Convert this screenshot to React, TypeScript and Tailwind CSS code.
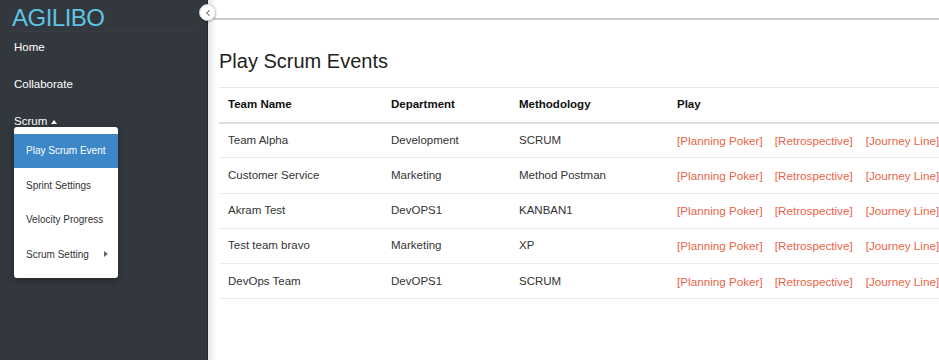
import { ChevronLeft } from 'lucide-react';

const teams = [
  { name: 'Team Alpha', dept: 'Development', method: 'SCRUM' },
  { name: 'Customer Service', dept: 'Marketing', method: 'Method Postman' },
  { name: 'Akram Test', dept: 'DevOPS1', method: 'KANBAN1' },
  { name: 'Test team bravo', dept: 'Marketing', method: 'XP' },
  { name: 'DevOps Team', dept: 'DevOPS1', method: 'SCRUM' },
];

const scrumMenu = ['Play Scrum Event', 'Sprint Settings', 'Velocity Progress', 'Scrum Setting'];

function Sidebar() {
  return (
    <aside className="w-[208px] shrink-0 h-full bg-[#33383f] border-r border-[#24282d]">
      <div className="mx-3 h-[32px] border-b border-[#383d44]">
        <div className="pt-[6px] text-[24px] leading-[24px] tracking-[-0.5px] text-[#5ec4e1]">AGILIBO</div>
      </div>
      <nav className="flex flex-col gap-[24px] pt-[9px] px-[14px] text-[11.5px] leading-[13px] text-white">
        <a href="#">Home</a>
        <a href="#">Collaborate</a>
        <div className="relative">
          <a href="#" className="inline-flex items-center gap-[4px]">
            Scrum
            <span className="w-0 h-0 border-l-[3.5px] border-r-[3.5px] border-b-[4px] border-l-transparent border-r-transparent border-b-white" />
          </a>
          <ul className="absolute left-0 top-[calc(100%-1.5px)] w-[104px] bg-white rounded-[3px] shadow-[0_2px_6px_rgba(0,0,0,0.35)] pt-[7px] pb-[6px] text-[10px] text-[#333]">
            {scrumMenu.map((item, i) => (
              <li
                key={item}
                className={
                  'h-[34.5px] flex items-center justify-between pl-[12px] pr-[10px] ' +
                  (i === 0 ? 'bg-[#3b87c8] text-white' : '')
                }
              >
                <span>{item}</span>
                {item === 'Scrum Setting' && (
                  <span className="w-0 h-0 border-t-[3.5px] border-b-[3.5px] border-l-[4px] border-t-transparent border-b-transparent border-l-[#666]" />
                )}
              </li>
            ))}
          </ul>
        </div>
      </nav>
    </aside>
  );
}

export default function App() {
  return (
    <div className="flex h-screen w-full overflow-hidden bg-white font-['Liberation_Sans',Arial,sans-serif]">
      <Sidebar />
      <main className="relative flex-1 min-w-0">
        <div className="absolute left-0 top-0 bottom-0 w-[8px] bg-gradient-to-r from-black/10 to-transparent" />
        <button className="absolute -left-[9px] top-[4px] z-10 w-[17px] h-[17px] rounded-full bg-white border border-[#cfcfcf] shadow-[0_1px_2px_rgba(0,0,0,0.3)] flex items-center justify-center text-[#555]">
          <ChevronLeft className="w-[10px] h-[10px]" strokeWidth={2.5} />
        </button>
        <div className="h-[20px] border-b-2 border-[#c9c9c9] ml-[6px]" />
        <div className="pl-[11px]">
          <h1 className="mt-[29px] mb-[14px] text-[20px] leading-[24px] text-[#222]">Play Scrum Events</h1>
          <table className="w-[760px] table-fixed border-collapse text-[11.5px] text-[#333]">
            <colgroup>
              <col className="w-[163px]" />
              <col className="w-[128px]" />
              <col className="w-[158px]" />
              <col />
            </colgroup>
            <thead>
              <tr className="h-[35px] border-t border-[#e6e6e6] border-b-2 border-b-[#dedede] text-left text-[#111]">
                <th className="pl-[9px] font-bold">Team Name</th>
                <th className="pl-[9px] font-bold">Department</th>
                <th className="pl-[9px] font-bold">Methodology</th>
                <th className="pl-[9px] font-bold">Play</th>
              </tr>
            </thead>
            <tbody>
              {teams.map((t) => (
                <tr key={t.name} className="h-[35.3px] border-b border-[#ececec]">
                  <td className="pl-[9px]">{t.name}</td>
                  <td className="pl-[9px]">{t.dept}</td>
                  <td className="pl-[9px]">{t.method}</td>
                  <td className="pl-[9px] whitespace-nowrap text-[11.7px] text-[#ea6548]">
                    <a href="#">[Planning Poker]</a>
                    <a href="#" className="ml-[12px]">[Retrospective]</a>
                    <a href="#" className="ml-[13px]">[Journey Line]</a>
                  </td>
                </tr>
              ))}
            </tbody>
          </table>
        </div>
      </main>
    </div>
  );
}
